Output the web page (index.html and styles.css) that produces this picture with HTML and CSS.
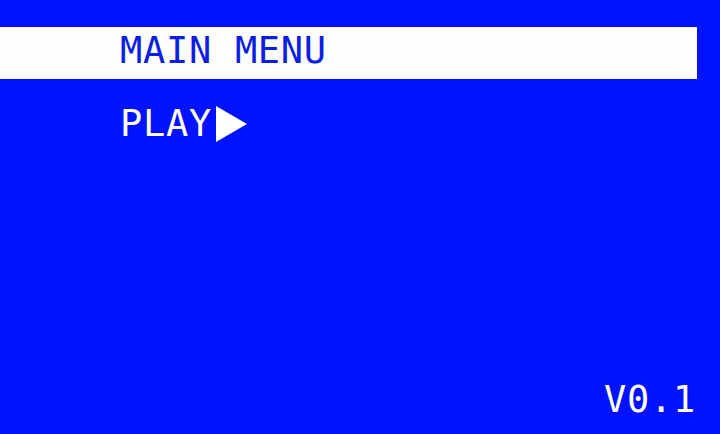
FILE: index.html
```html
<!DOCTYPE html>
<html lang="en">
<head>
<meta charset="utf-8">
<title>Main Menu</title>
<link rel="stylesheet" href="styles.css">
</head>
<body>
  <div class="screen">
    <header class="title-bar">
      <h1 class="title">MAIN MENU</h1>
    </header>
    <nav class="menu">
      <div class="menu-item">
        <span class="menu-label">PLAY</span>
        <svg class="cursor" width="31" height="36" viewBox="0 0 31 36" aria-hidden="true">
          <polygon points="0,0 31,18 0,36" fill="#ffffff"/>
        </svg>
      </div>
    </nav>
    <footer class="version">V0.1</footer>
  </div>
</body>
</html>
```
FILE: styles.css
```css
html, body {
  margin: 0;
  padding: 0;
  background: #0012ff;
}

.screen {
  width: 720px;
  height: 434px;
  display: flex;
  flex-direction: column;
  background: #0012ff;
  color: #ffffff;
  font-family: "DejaVu Sans Mono", "Liberation Mono", monospace;
  font-size: 37px;
  letter-spacing: 0.7px;
  overflow: hidden;
}

.title-bar {
  margin-top: 27px;
  width: 697px;
  height: 52px;
  box-sizing: border-box;
  padding-left: 120px;
  background: #fdfdfd;
}

.title {
  margin: 0;
  font-size: 37px;
  font-weight: normal;
  line-height: 48px;
  color: #0a1ee6;
}

.menu {
  margin-top: 21px;
  padding-left: 120px;
}

.menu-item {
  display: flex;
  align-items: center;
  height: 48px;
  line-height: 48px;
}

.cursor {
  margin-left: 4px;
  display: block;
}

.version {
  margin-top: auto;
  align-self: flex-end;
  padding-right: 24px;
  padding-bottom: 10px;
  line-height: 48px;
}
```
